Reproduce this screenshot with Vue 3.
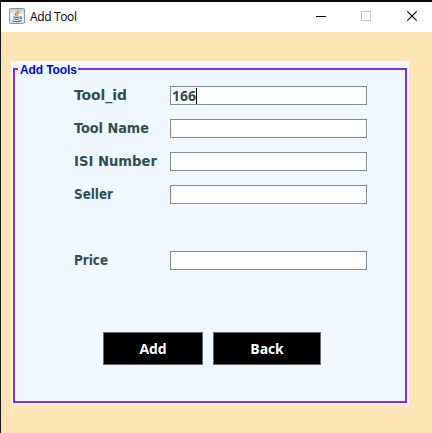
<script setup>
import { ref } from 'vue'

const fields = ref([
  { key: 'id', label: 'Tool_id', value: '166', width: 53, caret: true },
  { key: 'name', label: 'Tool Name', value: '', width: 75 },
  { key: 'isi', label: 'ISI Number', value: '', width: 83 },
  { key: 'seller', label: 'Seller', value: '', width: 39 },
  { key: 'price', label: 'Price', value: '', width: 34 },
])
</script>

<template>
  <div class="window">
    <header class="titlebar">
      <svg class="java" width="16" height="16" viewBox="0 0 16 16">
        <defs>
          <linearGradient id="tile" x1="0" y1="0" x2="0" y2="1">
            <stop offset="0" stop-color="#b4c9d8" />
            <stop offset=".45" stop-color="#f3f7f9" />
            <stop offset="1" stop-color="#d4e0e8" />
          </linearGradient>
        </defs>
        <rect x=".5" y=".5" width="15" height="15" rx=".8" fill="url(#tile)" stroke="#7d98ac" />
        <path d="M9.3 2.2C9.6 4 6 4.7 6.1 6.4c0 .9 1 1.3 1.4 2.1M10.5 4.4C9 5 7.7 5.7 8.2 6.7c.3.6.6 1 .1 1.7" fill="none" stroke="#e58332" stroke-width="1.25" />
        <path d="M4.2 8.8c1.7.8 4.8.7 6.6.1M4.8 10.8c1.5.7 3.9.7 5.5 0M3.2 12.7c2.5 1 7.1.9 9.4-.2M11 8.9c2-.5 2.3 1.4.1 2.2" fill="none" stroke="#49779b" stroke-width="1.1" />
      </svg>
      <span class="caption">Add Tool</span>
      <svg class="controls" width="104" height="12" viewBox="0 0 104 12" fill="none">
        <path d="M0 6.5h10" stroke="#000" />
        <rect x="45.5" y="1.5" width="9" height="9" stroke="#c8c8c8" />
        <path d="M91.3 1.3l9.4 9.4M100.7 1.3l-9.4 9.4" stroke="#000" stroke-width="1.1" />
      </svg>
    </header>

    <main class="panel">
      <section class="group">
        <h1 class="legend">Add Tools</h1>
        <form class="fields" @submit.prevent>
          <div v-for="f in fields" :key="f.key" class="row" :class="{ spaced: f.key === 'price' }">
            <svg class="label" width="90" height="20">
              <text x="0" y="14" :textLength="f.width" lengthAdjust="spacingAndGlyphs">{{ f.label }}</text>
            </svg>
            <div class="input"><span>{{ f.value }}</span><i v-if="f.caret" class="caret"></i></div>
          </div>
        </form>
        <div class="actions">
          <button class="add" type="button">Add</button>
          <button class="back" type="button">Back</button>
        </div>
      </section>
    </main>
  </div>
</template>

<style>
body {
  margin: 0;
  overflow: hidden;
}
</style>

<style scoped>
.window {
  box-sizing: border-box;
  width: 432px;
  height: 433px;
  border-top: 2px solid #080606;
  border-left: 1px solid #1b1b1b;
  background: #ffe4b5;
}
.titlebar {
  display: flex;
  align-items: center;
  box-sizing: border-box;
  height: 30px;
  padding: 0 12px 0 8px;
  background: #fff;
}
.java {
  margin-top: -2px;
}
.caption {
  margin-left: 5px;
  font: 12px/16px "Open Sans", "Noto Sans", sans-serif;
  letter-spacing: -0.35px;
  color: #000;
}
.controls {
  margin: -2px 0 0 auto;
}
.panel {
  box-sizing: border-box;
  width: 398px;
  height: 344px;
  margin: 29px 0 0 10px;
  padding: 7px 2px 2px;
  background: #f0f8ff;
}
.group {
  box-sizing: border-box;
  height: 335px;
  border: 2px solid #8a2be2;
}
.legend {
  width: 60px;
  height: 14px;
  margin: -7px 0 0 3px;
  padding-left: 2px;
  box-sizing: border-box;
  background: #f0f8ff;
  font: bold 12px/14px "Liberation Sans", Arial, sans-serif;
  letter-spacing: -0.1px;
  white-space: nowrap;
  color: #0000ff;
}
.fields {
  padding: 9px 0 0 59px;
}
.row {
  display: flex;
  height: 33px;
}
.row.spaced {
  margin-top: 33px;
}
.label {
  flex: none;
  width: 96px;
  font: bold 14px "DejaVu Sans Condensed", "DejaVu Sans", sans-serif;
  fill: #2f4f4f;
}
.input {
  display: flex;
  align-items: center;
  box-sizing: border-box;
  width: 197px;
  height: 19px;
  padding-left: 1px;
  border: 1px solid #7a8a99;
  background: #fff;
  box-shadow: 1px 1px 0 #fff;
  font: bold 14px/17px "Noto Sans", sans-serif;
  color: #2f4f4f;
}
.caret {
  width: 1px;
  height: 16px;
  background: #000;
}
.actions {
  display: flex;
  gap: 10px;
  padding: 48px 0 0 88px;
}
.actions button {
  box-sizing: border-box;
  height: 33px;
  padding: 0;
  border: 1px solid #696969;
  background: #000;
  color: #fff;
  font: bold 14px/31px "Open Sans", "Noto Sans", sans-serif;
  letter-spacing: -0.1px;
}
.actions .add {
  width: 100px;
}
.actions .back {
  width: 108px;
}
</style>
